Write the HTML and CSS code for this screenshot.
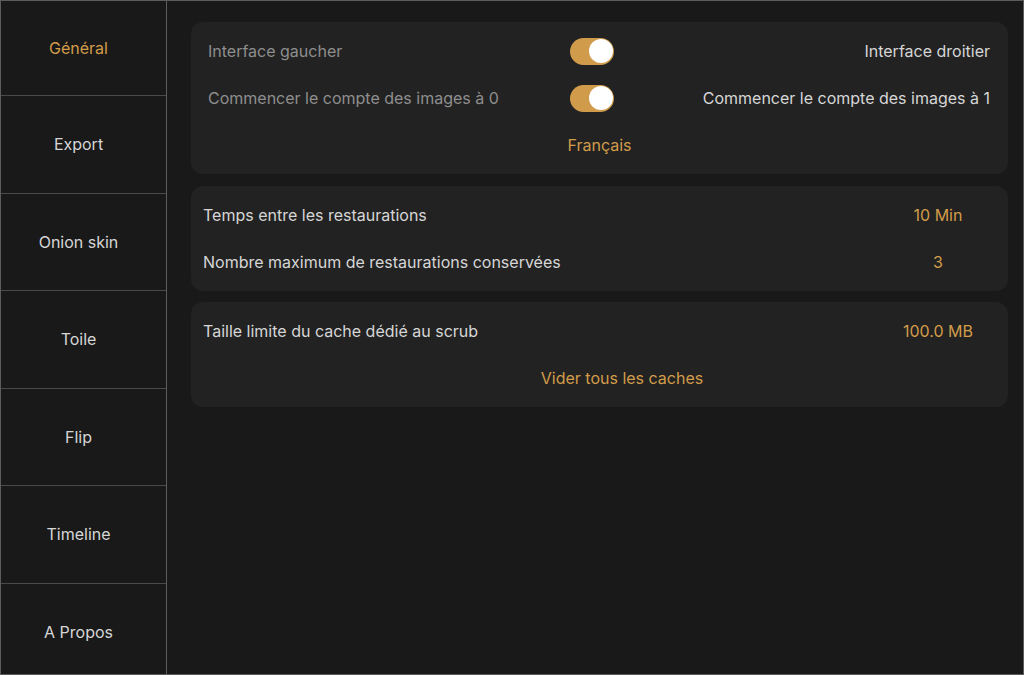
FILE: index.html
```html
<!DOCTYPE html>
<html lang="fr">
<head>
    <meta charset="UTF-8">
    <meta name="viewport" content="width=device-width, initial-scale=1.0">
    <title>Réglages</title>
    <link rel="stylesheet" href="styles.css">
</head>
<body>

    <div class="app">
        <!-- Sidebar -->
        <nav class="sidebar">
            <div class="nav-item active">Général</div>
            <div class="nav-item">Export</div>
            <div class="nav-item">Onion skin</div>
            <div class="nav-item">Toile</div>
            <div class="nav-item">Flip</div>
            <div class="nav-item">Timeline</div>
            <div class="nav-item">A Propos</div>
        </nav>

        <main class="content">
            <!-- Interface -->
            <section class="card">
                <div class="switch-row">
                    <span class="label-off">Interface gaucher</span>
                    <span class="toggle"><span class="knob"></span></span>
                    <span class="label-on">Interface droitier</span>
                </div>
                <div class="switch-row">
                    <span class="label-off">Commencer le compte des images à 0</span>
                    <span class="toggle"><span class="knob"></span></span>
                    <span class="label-on">Commencer le compte des images à 1</span>
                </div>
                <div class="center-row accent">Français</div>
            </section>

            <!-- Restaurations -->
            <section class="card">
                <div class="value-row">
                    <span>Temps entre les restaurations</span>
                    <span class="value accent">10 Min</span>
                </div>
                <div class="value-row">
                    <span>Nombre maximum de restaurations conservées</span>
                    <span class="value accent">3</span>
                </div>
            </section>

            <!-- Cache -->
            <section class="card">
                <div class="value-row">
                    <span>Taille limite du cache dédié au scrub</span>
                    <span class="value accent">100.0 MB</span>
                </div>
                <div class="center-row accent shifted">Vider tous les caches</div>
            </section>
        </main>
    </div>

</body>
</html>
```

FILE: styles.css
```css
html, body {
    margin: 0;
    padding: 0;
    background-color: #191919;
    font-family: Inter, "Noto Sans", sans-serif;
    font-size: 16px;
}
.app {
    box-sizing: border-box;
    width: 1024px;
    height: 675px;
    border: 1px solid #5c5c5c;
    display: flex;
    overflow: hidden;
}
.sidebar {
    width: 165px;
    flex-shrink: 0;
    border-right: 1px solid #5c5c5c;
    display: flex;
    flex-direction: column;
}
.nav-item {
    box-sizing: border-box;
    height: 97.5px;
    flex-shrink: 0;
    border-bottom: 1px solid #4a4a4a;
    display: flex;
    align-items: center;
    justify-content: center;
    padding-right: 10px;
    color: #d6d6d6;
    font-size: 16px;
}
.nav-item:first-child {
    height: 95px;
}
.nav-item:last-child {
    border-bottom: none;
}
.nav-item.active {
    color: #d29c4a;
}
.content {
    flex: 1;
    padding: 21px 15px 0 24px;
    display: flex;
    flex-direction: column;
    gap: 11.5px;
}
.card {
    background-color: #222222;
    border-radius: 12px;
    padding: 5.5px 0;
}
.accent {
    color: #d29c4a;
}
.switch-row {
    height: 47px;
    display: grid;
    grid-template-columns: 362px 44px 1fr;
    align-items: center;
    padding: 0 18px 0 17px;
}
.label-off {
    color: #8e8e8e;
}
.label-on {
    color: #d6d6d6;
    text-align: right;
}
.toggle {
    position: relative;
    width: 44px;
    height: 27px;
    border-radius: 14px;
    background-color: #d09c4c;
}
.knob {
    position: absolute;
    top: 1.5px;
    right: 1.5px;
    width: 24px;
    height: 24px;
    border-radius: 50%;
    background-color: #fff;
}
.center-row {
    height: 47px;
    display: flex;
    align-items: center;
    justify-content: center;
}
.center-row.shifted {
    padding-left: 45px;
}
.value-row {
    height: 47px;
    display: flex;
    align-items: center;
    justify-content: space-between;
    padding: 0 20px 0 12px;
    color: #d6d6d6;
}
.value {
    width: 100px;
    text-align: center;
}
```
